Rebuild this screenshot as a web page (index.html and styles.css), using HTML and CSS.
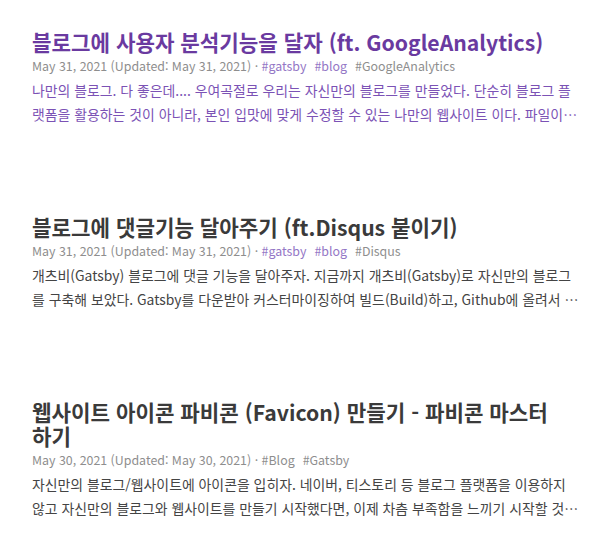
FILE: index.html
```html
<!DOCTYPE html>
<html lang="ko">
<head>
<meta charset="utf-8">
<link rel="stylesheet" href="styles.css">
</head>
<body>
<main class="list">
  <article class="post is-hover">
    <h2 class="title">블로그에 사용자 분석기능을 달자 (ft. GoogleAnalytics)</h2>
    <div class="meta">May 31, 2021 (Updated: May 31, 2021) · <span class="tag">#gatsby</span><span class="tag">#blog</span><span class="tag plain">#GoogleAnalytics</span></div>
    <p class="excerpt">나만의 블로그. 다 좋은데.... 우여곡절로 우리는 자신만의 블로그를 만들었다. 단순히 블로그 플랫폼을 활용하는 것이 아니라, 본인 입맛에 맞게 수정할 수 있는 나만의 웹사이트 이다. 파일이 어디에 있는지, 어떻게 동작하는지 모두 알 수 있다.</p>
  </article>
  <article class="post">
    <h2 class="title">블로그에 댓글기능 달아주기 (ft.Disqus 붙이기)</h2>
    <div class="meta">May 31, 2021 (Updated: May 31, 2021) · <span class="tag">#gatsby</span><span class="tag">#blog</span><span class="tag plain">#Disqus</span></div>
    <p class="excerpt">개츠비(Gatsby) 블로그에 댓글 기능을 달아주자. 지금까지 개츠비(Gatsby)로 자신만의 블로그를 구축해 보았다. Gatsby를 다운받아 커스터마이징하여 빌드(Build)하고, Github에 올려서 배포까지 해보았다.</p>
  </article>
  <article class="post">
    <h2 class="title">웹사이트 아이콘 파비콘 (Favicon) 만들기 - 파비콘 마스터 하기</h2>
    <div class="meta">May 30, 2021 (Updated: May 30, 2021) · <span class="tag plain">#Blog</span><span class="tag plain">#Gatsby</span></div>
    <p class="excerpt">자신만의 블로그/웹사이트에 아이콘을 입히자. 네이버, 티스토리 등 블로그 플랫폼을 이용하지 않고 자신만의 블로그와 웹사이트를 만들기 시작했다면, 이제 차츰 부족함을 느끼기 시작할 것이다.</p>
  </article>
</main>
</body>
</html>
```

FILE: styles.css
```css
html, body {
  margin: 0;
  padding: 0;
  background: #ffffff;
}
body {
  font-family: "Noto Sans CJK KR", sans-serif;
  color: #333333;
}
.list {
  display: flex;
  flex-direction: column;
  gap: 89px;
  padding: 30px 10px 0 32px;
}
.post {
  display: flex;
  flex-direction: column;
}
.title {
  margin: 0;
  font-size: 21.2px;
  font-weight: 700;
  line-height: 24px;
  color: #3a3a3a;
  word-break: keep-all;
}
.meta {
  font-size: 12.4px;
  line-height: 24px;
  color: #8e8e8e;
}
.tag {
  color: #9477c6;
  margin-right: 8px;
}
.tag.plain {
  color: #8e8e8e;
}
.excerpt {
  margin: 0;
  font-size: 13.9px;
  line-height: 24px;
  color: #444444;
  display: -webkit-box;
  -webkit-box-orient: vertical;
  -webkit-line-clamp: 2;
  overflow: hidden;
}
.is-hover .title {
  color: #6a3aa0;
}
.is-hover .excerpt {
  color: #7b52b5;
}
```
